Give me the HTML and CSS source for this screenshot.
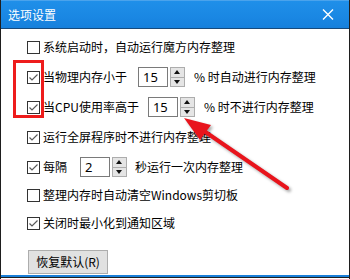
FILE: index.html
```html
<!DOCTYPE html>
<html lang="zh-CN">
<head>
<meta charset="utf-8">
<title>选项设置</title>
<link rel="stylesheet" href="styles.css">
</head>
<body>
<div class="window">
  <div class="titlebar">
    <span class="title">选项设置</span>
    <svg class="close" width="12" height="11" viewBox="0 0 12 11"><path d="M1 0.5 L11 10.5 M11 0.5 L1 10.5" stroke="#fff" stroke-width="1.4" fill="none"/></svg>
  </div>
  <div class="content">
    <div class="row">
      <span class="cb"></span><span class="label">系统启动时，自动运行魔方内存整理</span>
    </div>
    <div class="row">
      <span class="cb checked"><svg viewBox="0 0 13 13"><polyline points="2.5,6.5 5,9 10.5,3.5" fill="none" stroke="#5a5a5a" stroke-width="1.2"/></svg></span><span class="label">当物理内存小于</span>
      <span class="num n1">15</span><span class="spin"><span class="up"></span><span class="down"></span></span>
      <span class="label after">% 时自动进行内存整理</span>
    </div>
    <div class="row">
      <span class="cb checked"><svg viewBox="0 0 13 13"><polyline points="2.5,6.5 5,9 10.5,3.5" fill="none" stroke="#5a5a5a" stroke-width="1.2"/></svg></span><span class="label">当CPU使用率高于</span>
      <span class="num n2">15</span><span class="spin"><span class="up"></span><span class="down"></span></span>
      <span class="label after">% 时不进行内存整理</span>
    </div>
    <div class="row">
      <span class="cb checked"><svg viewBox="0 0 13 13"><polyline points="2.5,6.5 5,9 10.5,3.5" fill="none" stroke="#5a5a5a" stroke-width="1.2"/></svg></span><span class="label">运行全屏程序时不进行内存整理</span>
    </div>
    <div class="row">
      <span class="cb checked"><svg viewBox="0 0 13 13"><polyline points="2.5,6.5 5,9 10.5,3.5" fill="none" stroke="#5a5a5a" stroke-width="1.2"/></svg></span><span class="label">每隔</span>
      <span class="num n3">2</span><span class="spin"><span class="up"></span><span class="down"></span></span>
      <span class="label after3">秒运行一次内存整理</span>
    </div>
    <div class="row short first-short">
      <span class="cb"></span><span class="label">整理内存时自动清空Windows剪切板</span>
    </div>
    <div class="row short">
      <span class="cb checked"><svg viewBox="0 0 13 13"><polyline points="2.5,6.5 5,9 10.5,3.5" fill="none" stroke="#5a5a5a" stroke-width="1.2"/></svg></span><span class="label">关闭时最小化到通知区域</span>
    </div>
    <div class="btnrow">
      <span class="btn">恢复默认(R)</span>
    </div>
  </div>
  <div class="bottomline"></div>

  <div class="redbox"></div>
  <svg class="arrow" width="350" height="279" viewBox="0 0 350 279">
    <line x1="204" y1="131" x2="287" y2="188" stroke="#e8141c" stroke-width="4" stroke-linecap="round"/>
    <polygon points="184,118 211,125 200,140" fill="#e8141c"/>
  </svg>
</div>
</body>
</html>
```
FILE: styles.css
```css
html, body {
  margin: 0;
  padding: 0;
  background: #ffffff;
}
.window {
  position: relative;
  width: 350px;
  height: 279px;
  box-sizing: border-box;
  border-left: 1px solid #1e1e1e;
  border-right: 1px solid #1e1e1e;
  display: flex;
  flex-direction: column;
  overflow: hidden;
  font-family: "Noto Sans CJK SC", "Noto Sans", sans-serif;
  font-size: 12px;
  color: #000;
}
.titlebar {
  height: 29px;
  box-sizing: border-box;
  margin: 0 -1px;
  border-top: 1px solid #4aa3ec;
  border-bottom: 1px solid #174a7c;
  background: linear-gradient(#1f8fe9, #1a87e3 60%, #1680dc);
  display: flex;
  align-items: center;
  justify-content: space-between;
  padding: 0 16px 0 8px;
}
.title {
  color: #fff;
  font-size: 12px;
  line-height: 16px;
  margin-top: 1px;
}
.close {
  display: block;
  margin-top: 0;
}
.content {
  flex: 1;
  padding: 3px 0 0 26px;
}
.row {
  height: 30px;
  display: flex;
  align-items: center;
}
.row.short {
  height: 28px;
}
.row.first-short {
  margin-top: -1px;
}
.cb {
  width: 13px;
  height: 13px;
  box-sizing: border-box;
  border: 1px solid #333;
  background: #fff;
  flex: none;
  position: relative;
}
.cb svg {
  position: absolute;
  left: -1px;
  top: -1px;
  width: 13px;
  height: 13px;
}
.label {
  margin-left: 3px;
  line-height: 16px;
  white-space: nowrap;
}
.num {
  width: 30px;
  height: 20px;
  box-sizing: border-box;
  border: 1px solid #7a7a7a;
  font-family: "Noto Sans", "Open Sans", sans-serif;
  font-size: 13px;
  line-height: 18px;
  padding-left: 4px;
  flex: none;
}
.n1 { margin-left: 11px; }
.n2 { margin-left: 9px; }
.n3 { margin-left: 13px; }
.spin {
  width: 15px;
  height: 20px;
  margin-left: 2px;
  display: flex;
  flex-direction: column;
  gap: 0;
  flex: none;
}
.spin .up, .spin .down {
  flex: 1;
  box-sizing: border-box;
  border: 1px solid #adadad;
  background: #e5e5e5;
  position: relative;
}
.spin .down {
  border-top: none;
}
.spin .up::after, .spin .down::after {
  content: "";
  position: absolute;
  left: 3px;
  width: 0;
  height: 0;
  border-left: 3.5px solid transparent;
  border-right: 3.5px solid transparent;
}
.spin .up::after {
  top: 2px;
  border-bottom: 4px solid #111;
}
.spin .down::after {
  top: 2px;
  border-top: 4px solid #111;
}
.label.after { margin-left: 9px; }
.label.after3 { margin-left: 8px; }
.btnrow {
  margin-top: 13px;
  display: flex;
  margin-left: 1px;
}
.btn {
  width: 80px;
  height: 24px;
  box-sizing: border-box;
  border: 1px solid #adadad;
  background: #e1e1e1;
  display: flex;
  align-items: center;
  justify-content: center;
  line-height: 16px;
}
.bottomline {
  height: 3px;
  margin: 0 -1px 1px;
  border-top: 2px solid #1a7fd8;
  border-bottom: 1px solid #1e1e1e;
  box-sizing: border-box;
}
.redbox {
  position: absolute;
  left: 12px;
  top: 60px;
  width: 31px;
  height: 58px;
  box-sizing: border-box;
  border: 3px solid #ee1c1c;
}
.arrow {
  position: absolute;
  left: -1px;
  top: 0;
  filter: drop-shadow(2px 2px 1.5px rgba(0,0,0,0.35));
}
```
